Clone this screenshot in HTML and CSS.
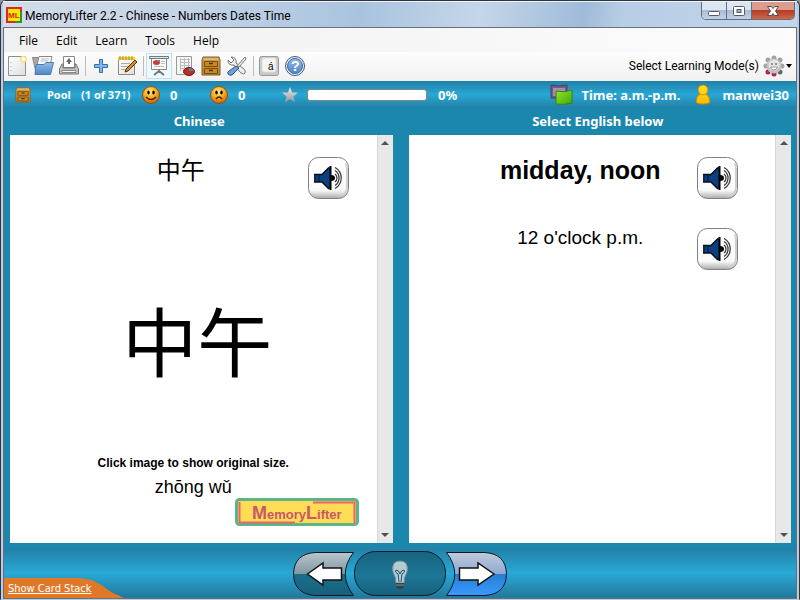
FILE: index.html
```html
<!DOCTYPE html>
<html lang="en">
<head>
<meta charset="utf-8">
<title>MemoryLifter 2.2 - Chinese - Numbers Dates Time</title>
<link rel="stylesheet" href="styles.css">
</head>
<body>
<svg class="defs" aria-hidden="true">
  <defs>
    <linearGradient id="wood" x1="0" y1="0" x2="0" y2="1"><stop offset="0" stop-color="#d9a048"/><stop offset="1" stop-color="#b87c28"/></linearGradient>
    <linearGradient id="page" x1="0" y1="0" x2="1" y2="1"><stop offset="0" stop-color="#fff"/><stop offset="1" stop-color="#dedede"/></linearGradient>
    <linearGradient id="blue" x1="0" y1="0" x2="0" y2="1"><stop offset="0" stop-color="#94bce6"/><stop offset="1" stop-color="#4f86c6"/></linearGradient>
    <radialGradient id="face" cx=".45" cy=".3" r=".7"><stop offset="0" stop-color="#ffe78a"/><stop offset=".55" stop-color="#f9a81c"/><stop offset="1" stop-color="#c95f08"/></radialGradient>
    <linearGradient id="silver" x1="0" y1="0" x2="0" y2="1"><stop offset="0" stop-color="#f0f0f0"/><stop offset="1" stop-color="#929292"/></linearGradient>
    <linearGradient id="bevel" x1="0" y1="0" x2="0" y2="1"><stop offset="0" stop-color="#fff"/><stop offset=".8" stop-color="#fafafa"/><stop offset="1" stop-color="#aaa"/></linearGradient>
    <linearGradient id="gold" x1="0" y1="0" x2="0" y2="1"><stop offset="0" stop-color="#ffe61e"/><stop offset="1" stop-color="#ffb800"/></linearGradient>
    <linearGradient id="green" x1="0" y1="0" x2="1" y2="1"><stop offset="0" stop-color="#94e82a"/><stop offset="1" stop-color="#43a608"/></linearGradient>
    <linearGradient id="prevfill" x1="0" y1="0" x2="0" y2="1"><stop offset="0" stop-color="#b9c6cc"/><stop offset=".49" stop-color="#8497a3"/><stop offset=".5" stop-color="#18708c"/><stop offset="1" stop-color="#195f7c"/></linearGradient>
    <linearGradient id="nextfill" x1="0" y1="0" x2="0" y2="1"><stop offset="0" stop-color="#c0cbd8"/><stop offset=".49" stop-color="#91a8d4"/><stop offset=".5" stop-color="#247fd0"/><stop offset="1" stop-color="#3c98ff"/></linearGradient>
    <linearGradient id="midfill" x1="0" y1="0" x2="0" y2="1"><stop offset="0" stop-color="#18627f"/><stop offset=".55" stop-color="#1c7795"/><stop offset="1" stop-color="#185f7b"/></linearGradient>
  </defs>
  <symbol id="speaker" viewBox="0 0 42 42">
    <rect x=".5" y=".5" width="40" height="41" rx="10" fill="url(#bevel)" stroke="#808080"/>
    <path d="M38 6q1 3 1 7v17q0 8-8 9" fill="none" stroke="#d0d0d0" stroke-width="2"/>
    <path d="M6 17h8l6-6 3-2v24l-3-2-6-6H6z" fill="#0a3f80"/>
    <path d="M6 17.500h8l7-7M6 25h8l7 7" fill="none" stroke="#06101c" stroke-width="1.500"/>
    <path d="M7 17v8M11 17v8" stroke="#051426"/>
    <path d="M22.500 9v24" stroke="#000" stroke-width="2"/>
    <path d="M23 18q4 0 4 3t-4 3z" fill="#000"/>
    <path d="M27 17a5 5 0 0 1 0 8M27 13.500a9 9 0 0 1 0 15M27 10.500a12 12 0 0 1 0 21" fill="none" stroke="#333" stroke-width="1.200"/>
  </symbol>
  <symbol id="crate" viewBox="0 0 20 20">
    <path d="M2 1h16l1 3v15H1V4z" fill="url(#wood)" stroke="#7b612f"/>
    <path d="M3 2h14l1 2H2z" fill="#d9b873"/>
    <path d="M3.500 5.500h13v5h-13zM3.500 12.500h13v5h-13z" fill="#cc8720" stroke="#754f16"/>
    <path d="M8 7.500h4M8 14.500h4" stroke="#4b3208" stroke-width="1.500"/>
  </symbol>
</svg>

<div class="window">
  <header class="titlebar">
    <svg class="appicon" viewBox="0 0 16 16" aria-hidden="true"><rect x="1" y="1" width="14" height="14" fill="#ffe600" stroke="#d52b20" stroke-width="2"/><path d="M9 15h6V5" fill="none" stroke="#25963a" stroke-width="2"/><text x="2" y="11" class="ml">ML</text></svg>
    <h1>MemoryLifter 2.2 - Chinese - Numbers Dates Time</h1>
    <div class="captions">
      <button aria-label="Minimize"><svg viewBox="0 0 14 12"><rect x="1.500" y="6.500" width="11" height="4" rx="1" fill="#fff" stroke="#535b6b"/></svg></button>
      <button aria-label="Maximize"><svg viewBox="0 0 14 12"><rect x="1.500" y="1.500" width="11" height="9" rx="1" fill="#fff" stroke="#535b6b"/><rect x="5" y="4.500" width="4" height="3" fill="#9cb0c8" stroke="#535b6b"/></svg></button>
      <button class="close" aria-label="Close"><svg viewBox="0 0 14 12"><path d="M1.500 1.500h4L7 3.500l1.500-2h4L9.500 6l3 4.500h-4L7 8.500l-1.500 2h-4l3-4.500z" fill="#fff" stroke="#5b4650"/></svg></button>
    </div>
  </header>

  <main class="client">
    <nav class="menu">
      <button>File</button><button>Edit</button><button>Learn</button><button>Tools</button><button>Help</button>
    </nav>

    <div class="toolbar">
      <button aria-label="New"><svg viewBox="0 0 20 20"><path d="M1.500.5h17v19h-17z" fill="url(#page)" stroke="#909090"/><path d="M4 6v1M4 10v1M4 14v1" stroke="#aaa"/><circle cx="16.500" cy="3" r="3" fill="#fff3a0" stroke="#f0de70"/><circle cx="16.500" cy="3" r="1.500" fill="#fff"/></svg></button>
      <button aria-label="Open"><svg class="folder" viewBox="0 0 22 20"><path d="M.5 1.500h6l1 2h9v13H4z" fill="#a8a8a8" stroke="#888"/><path d="M7 .5h13l-2 9H5z" fill="#fafafa" stroke="#888"/><path d="M9 3h8M8.500 5h8" stroke="#bbb"/><path d="M4 8.500h8l2-2h7.500l-3 12H3z" fill="url(#blue)" stroke="#4a7ab5"/></svg></button>
      <button aria-label="Print"><svg viewBox="0 0 20 20"><path d="M4.500.5h11v11h-11z" fill="#fff" stroke="#888"/><path d="M10 3v5" stroke="#666" stroke-width="2"/><path d="M7 6l3-4 3 4z" fill="#666"/><path d="M3 8h1v4h12V8h1l2.500 5v5H.5v-5z" fill="#c4c4c4" stroke="#777"/><path d="M3 14.500h14v2H3z" fill="#f7f7f7" stroke="#888"/></svg></button>
      <hr>
      <button aria-label="Add"><svg viewBox="0 0 20 20"><path d="M8.500 3.500h3v5h5v3h-5v5h-3v-5h-5v-3h5z" fill="#80b4ed" stroke="#376fae"/></svg></button>
      <button aria-label="Edit card"><svg viewBox="0 0 20 20"><path d="M1.500 2.500h16v16h-16z" fill="url(#page)" stroke="#888"/><path d="M1 1h17v3H1z" fill="#f1cf3a"/><path d="M3 0v4M6 0v4M9 0v4M12 0v4M15 0v4" stroke="#ad8a1d"/><path d="M4 7.500h9M4 10.500h7M4 13.500h4" stroke="#aaa"/><path d="M18 4l2 2-9 9-3 1 1-3z" fill="#d38b22" stroke="#533711"/></svg></button>
      <hr>
      <button class="active" aria-label="Slideshow"><svg viewBox="0 0 20 20"><path d="M10 13v3M10 15l-5 4M10 15l5 4" stroke="#777" stroke-width="2"/><path d="M2.500 2.500h15v11h-15z" fill="#fff" stroke="#888"/><path d="M.5.5h19v2H.5z" fill="#e8e8e8" stroke="#777"/><ellipse cx="7.500" cy="6.500" rx="3.500" ry="2.500" fill="#d5352e"/><path d="M8 4h3v2H8z" fill="#558bc7"/><path d="M12 5.500h4M12 7.500h4M5 10.500h10" stroke="#bbb"/></svg></button>
      <button aria-label="Statistics"><svg viewBox="0 0 20 20"><path d="M1.500.5h15v18h-15z" fill="#f7f7f7" stroke="#999"/><path d="M5.500 2v13M9.500 2v13M13.500 2v13M5 3.500h10M5 6.500h10M5 9.500h10M5 12.500h10" stroke="#bbb"/><ellipse cx="14" cy="15.500" rx="5.500" ry="4" fill="#b92d25" stroke="#771a18"/><path d="M14 15v-3q4 0 5 3z" fill="#4b81bb"/></svg></button>
      <button aria-label="Card boxes"><svg><use href="#crate"/></svg></button>
      <button aria-label="Options"><svg viewBox="0 0 20 20"><path d="M4 1l3 3-3 3-3-3q0 6 6 5l7 8q3 2 4 0t-1-4L9 7Q10 1 4 1z" fill="#eee" stroke="#777"/><path d="M18 1l1 2-7 8-2-1z" fill="#eee" stroke="#777"/><path d="M9 10l3 2-7 7q-2 1-4-1-1-2 1-3z" fill="#6fa2dc" stroke="#285888"/></svg></button>
      <hr>
      <button aria-label="Special characters"><svg viewBox="0 0 20 20"><rect x=".5" y=".5" width="19" height="19" rx="2" fill="#c8c8c8" stroke="#999"/><rect x="3" y="2" width="14" height="14" rx="2" fill="#f4f4f4" stroke="#ddd"/><text x="9" y="14" class="key">á</text></svg></button>
      <button aria-label="Help"><svg viewBox="0 0 20 20"><circle cx="10" cy="10" r="9.500" fill="#e6eefa" stroke="#385985"/><circle cx="10" cy="10" r="7.500" fill="url(#blue)" stroke="#416b9e"/><text x="6" y="15" class="q">?</text></svg></button>
      <button class="modes">Select Learning Mode(s)
        <svg class="gear" viewBox="0 0 22 22"><g fill="#a2a2a2"><circle cx="11" cy="3" r="2.500"/><circle cx="17" cy="5" r="2.500"/><circle cx="19" cy="11" r="2.500"/><circle cx="17" cy="17" r="2.500" fill="#666"/><circle cx="11" cy="19" r="2.500" fill="#a9215d"/><circle cx="5" cy="17" r="2.500" fill="#a9215d"/><circle cx="3" cy="11" r="2.500"/><circle cx="5" cy="5" r="2.500"/></g><circle cx="11" cy="11" r="7.500" fill="#c2c2c2"/><circle cx="11" cy="10" r="5.500" fill="#e4e4e4"/><circle cx="9" cy="9" r="1" fill="#777"/><circle cx="13" cy="9" r="1" fill="#777"/><path d="M7.500 12h7q-1 3-3.500 3t-3.500-3z" fill="#fff" stroke="#999"/></svg>
        <svg class="drop" viewBox="0 0 6 4"><path d="M0 0h6L3 4z"/></svg>
      </button>
    </div>

    <section class="status">
      <svg class="i16" aria-hidden="true"><use href="#crate"/></svg>
      <span class="small pool">Pool</span><span class="small count">(1 of 371)</span>
      <svg class="i18" viewBox="0 0 18 18" aria-hidden="true"><circle cx="9" cy="9" r="8.500" fill="url(#face)" stroke="#96510a"/><ellipse cx="6.500" cy="6.500" rx="1.200" ry="2"/><ellipse cx="11.500" cy="6.500" rx="1.200" ry="2"/><path d="M4 11q5 5 10 0" fill="none" stroke="#4b2500" stroke-width="1.500"/></svg>
      <span class="score">0</span>
      <svg class="i18" viewBox="0 0 18 18" aria-hidden="true"><circle cx="9" cy="9" r="8.500" fill="url(#face)" stroke="#96510a"/><ellipse cx="6.500" cy="6.500" rx="1.200" ry="2"/><ellipse cx="11.500" cy="6.500" rx="1.200" ry="2"/><path d="M6 13q3-4 6 0" fill="none" stroke="#4b2500" stroke-width="1.500"/></svg>
      <span class="score wide">0</span>
      <svg class="i16" viewBox="0 0 16 16" aria-hidden="true"><path d="M8 0l2 5.500h6l-4.500 4 1.500 6-5-3.500-5 3.500 1.500-6L0 5.500h6z" fill="url(#silver)"/></svg>
      <div class="progress" role="progressbar" aria-label="Learned" aria-valuenow="0"></div>
      <span class="pct">0%</span>
      <svg class="cards" viewBox="0 0 23 21" aria-hidden="true"><path d="M1 1q7 2 16 0v13H1z" fill="#765a86" stroke="#45405e"/><path d="M3 4h12v8H3z" fill="#a291ac"/><path d="M6 7q8 2 16-1v13q-8 2-16 1z" fill="url(#green)" stroke="#38830f"/></svg>
      <span class="chapter">Time: a.m.-p.m.</span>
      <svg class="user" viewBox="0 0 18 21" aria-hidden="true"><path d="M6 10Q4 8 4 5q1-4 5-4t5 4q0 3-2 5 4 3 4 8-1 2-7 2t-7-2Q2 13 6 10z" fill="url(#gold)" stroke="#d48900"/><path d="M6 10q3 2 6 0" fill="none" stroke="#dc9900"/></svg>
      <span>manwei30</span>
    </section>

    <section class="decks">
      <article class="deck">
        <h2>Chinese</h2>
        <div class="sheet">
          <div class="content question">
            <div class="entry"><p class="hanzi" lang="zh">中午</p><button class="sound" aria-label="Play"><svg><use href="#speaker"/></svg></button></div>
            <p class="picture" lang="zh">中午</p>
            <p class="hint">Click image to show original size.</p>
            <p class="pinyin">zhōng wǔ</p>
            <div class="brand"><svg viewBox="0 0 124 28" role="img" aria-label="MemoryLifter"><rect x="1.500" y="1.500" width="121" height="25" rx="3" fill="#ffdc55" stroke="#5bb588" stroke-width="3"/><path d="M4.500 4v20.500H60M78 4.500h41.500V25" fill="none" stroke="#e8656b" stroke-width="2"/><text x="17" y="21"><tspan class="cap">M</tspan><tspan>emory</tspan><tspan class="cap">L</tspan><tspan>ifter</tspan></text></svg></div>
          </div>
          <div class="scroll" aria-hidden="true"><svg viewBox="0 0 8 4"><path d="M0 4h8L4 0z"/></svg><svg viewBox="0 0 8 4"><path d="M0 0h8L4 4z"/></svg></div>
        </div>
      </article>
      <article class="deck">
        <h2>Select English below</h2>
        <div class="sheet">
          <div class="content">
            <div class="entry"><p class="answer">midday, noon</p><button class="sound" aria-label="Play"><svg><use href="#speaker"/></svg></button></div>
            <div class="entry"><p class="example">12 o'clock p.m.</p><button class="sound" aria-label="Play"><svg><use href="#speaker"/></svg></button></div>
          </div>
          <div class="scroll" aria-hidden="true"><svg viewBox="0 0 8 4"><path d="M0 4h8L4 0z"/></svg><svg viewBox="0 0 8 4"><path d="M0 0h8L4 4z"/></svg></div>
        </div>
      </article>
    </section>

    <footer class="footer">
      <a class="stack" href="#stack">Show Card Stack</a>
      <div class="controls">
        <button aria-label="Previous"><svg class="side" viewBox="0 0 61 44"><path d="M60.500.5H22Q1 2 .5 22 1 42 22 43.500h38.500Q44 22 60.500.5z" fill="url(#prevfill)" stroke="#061b25"/><path d="M14.500 22L30 11v5h18.500v12H30v5z" fill="#fff" stroke="#111" stroke-width="1.500"/></svg></button>
        <button aria-label="Show answer"><svg class="mid" viewBox="0 0 92 46"><rect x=".5" y=".5" width="91" height="44" rx="21" fill="url(#midfill)" stroke="#05202c"/><path d="M42 32q0-6-3-11-2-11 7-11t7 11q-3 5-3 11z" fill="#b7c9d1" stroke="#72909e"/><path d="M45 31l-1-8q-4-2-2-4 3 0 4 4 1-4 4-4 2 2-2 4l-1 8" fill="none" stroke="#195d76"/><path d="M42 32h8v4l-2 2h-4l-2-2z" fill="#34424b"/><path d="M42 34h8" stroke="#809099"/></svg></button>
        <button aria-label="Next"><svg class="side" viewBox="0 0 61 44"><path d="M.5.5H39Q60 2 60.500 22 60 42 39 43.500H.5Q17 22 .5.5z" fill="url(#nextfill)" stroke="#061b25"/><path d="M48 22L32 11v5H13.500v12H32v5z" fill="#fff" stroke="#111" stroke-width="1.500"/></svg></button>
      </div>
    </footer>
  </main>
</div>
</body>
</html>
```

FILE: styles.css
```css
* { box-sizing: border-box; }
body { margin: 0; background: #8f9797; font: 12px "Open Sans", sans-serif; color: #000; }
h1, h2, p { margin: 0; font-weight: normal; }
button { padding: 0; border: 0; background: none; font: inherit; color: inherit; }
svg { display: block; flex: none; }
.defs { position: absolute; width: 0; height: 0; }

.window {
  display: flex; flex-direction: column; min-height: 100vh;
  padding: 0 2px; border: 1px solid #30353d; border-bottom-color: #b9cce2; border-radius: 6px 6px 0 0;
  background: #b9cce2;
}
.titlebar {
  display: flex; align-items: center; height: 26px; padding-left: 3px; border-top: 1px solid #eef4fa;
  background: linear-gradient(100deg, #d3dce8, #c2d3e6 25%, #a9c3df 45%, #c5d6e9 60%, #9fbbd9 73%, #b8cee6 78%, #c2d5eb);
}
.appicon { width: 16px; height: 16px; margin: 1px 3px 0 0; }
.ml { font: bold 8px "Liberation Sans", sans-serif; fill: #d31f1f; }
h1 { flex: 1; padding-top: 3px; font: 12px Roboto, sans-serif; }
.captions { display: flex; align-self: flex-start; margin-right: 2px; border: 1px solid #626e81; border-top: 0; border-radius: 0 0 5px 5px; overflow: hidden; }
.captions button { display: grid; place-items: center; width: 25px; height: 17px; border-right: 1px solid #626e81; background: linear-gradient(#dce6f1 45%, #a9bdd3 50%, #bfd2e7); }
.captions .close { width: 42px; border: 0; background: linear-gradient(#dc9c8e 45%, #b53d25 50%, #cf684a); }
.captions svg { width: 14px; height: 12px; }

.client { flex: 1; display: flex; flex-direction: column; border: 1px solid #66717c; background: #1c87ac; }
.menu { display: flex; height: 24px; padding-left: 6px; background: linear-gradient(90deg, #f0f0f0, #fcfcfc); }
.menu button { padding: 0 9px; }
.toolbar { display: flex; align-items: center; height: 29px; padding: 0 4px 2px 0; background: linear-gradient(#fdfdfd, #f1f1f1); }
.toolbar button { display: flex; justify-content: center; align-items: center; width: 26px; height: 26px; }
.toolbar svg { width: 20px; height: 20px; }
.toolbar .folder { width: 22px; }
.toolbar .active { border: 1px solid #bde3f3; background: #eef8fd; }
.toolbar hr { width: 1px; height: 20px; margin: 0 2px 0 3px; border: 0; background: #bbb; }
.key { font: 10px "Liberation Sans", sans-serif; }
.q { font: bold 14px "Liberation Sans", sans-serif; fill: #fff; }
.toolbar .modes { width: auto; margin-left: auto; gap: 4px; font: 12px Roboto, sans-serif; white-space: nowrap; }
.toolbar .gear { width: 22px; height: 22px; }
.toolbar .drop { width: 6px; height: 4px; margin-left: -3px; }

.status {
  display: flex; align-items: center; height: 27px; padding: 0 7px 0 11px;
  background: linear-gradient(#2280a8, #28a7d4 50%, #2280a5);
  color: #fff; font: bold 13px "Noto Sans", sans-serif; white-space: nowrap;
}
.small { font-size: 11px; }
.pool { width: 34px; margin-left: 16px; }
.count { width: 61px; }
.i16 { width: 16px; height: 16px; }
.i18 { width: 18px; height: 18px; }
.score { width: 40px; padding-left: 10px; }
.score + .i18 { margin-left: 10px; }
.wide { width: 54px; }
.progress { width: 120px; height: 12px; margin: 0 11px 0 9px; border: 1px solid #858585; border-radius: 3px; background: #fff; }
.cards { width: 23px; height: 21px; margin-left: auto; }
.chapter { margin: 0 14px 0 8px; }
.user { width: 18px; height: 21px; margin-right: 10px; }

.decks { flex: 1; display: flex; gap: 16px; padding: 0 5px 5px 6px; }
.deck { flex: 1; min-width: 0; display: flex; flex-direction: column; }
h2 { height: 27px; padding-right: 4px; color: #fff; font: bold 13px/26px "Noto Sans", sans-serif; text-align: center; }
.sheet { flex: 1; display: flex; background: #fff; }
.content { flex: 1; display: flex; flex-direction: column; padding-top: 22px; text-align: center; font-family: "Liberation Sans", sans-serif; }
.scroll { display: flex; flex-direction: column; justify-content: space-between; align-items: center; width: 16px; padding: 6px 0; background: #e8e8e8; border-left: 1px solid #d6d6d6; }
.scroll svg { width: 8px; height: 4px; fill: #505050; }
.entry { display: grid; grid-template-columns: 1fr 42px; height: 71px; padding-right: 36px; }
.entry p { padding-left: 55px; }
.question .entry { padding-right: 27px; }
.question .entry p { padding-left: 44px; }
.sound { width: 42px; height: 42px; }
.sound svg { width: 42px; height: 42px; }
.hanzi { font: 24px/24px "Noto Sans CJK SC", sans-serif; }
.answer { font-size: 25px; font-weight: bold; line-height: 26px; }
.example { font-size: 19px; line-height: 20px; }
.picture { margin: 63px 0 69px; padding-left: 8px; font: 75px/96px "Noto Sans CJK SC", sans-serif; }
.hint { font-size: 12px; font-weight: bold; line-height: 14px; }
.pinyin { padding-top: 6px; font-size: 18px; line-height: 22px; }
.brand { display: flex; justify-content: flex-end; padding: 0 18px 0 0; }
.brand svg { width: 124px; height: 28px; }
.brand text { font: bold 13px "Liberation Sans", sans-serif; fill: #c9566a; }
.brand .cap { font-size: 18px; }

.footer { display: grid; grid-template-columns: 1fr auto 1fr; height: 50px; background: linear-gradient(#2380a5, #29a8d6 50%, #22789b); }
.stack {
  align-self: end; width: 120px; height: 20px; padding: 1px 0 0 4px;
  background: #e07828; clip-path: polygon(0 0, 63% 0, 73% 10%, 81% 35%, 90% 72%, 100% 100%, 0 100%);
  color: #fff; font: 11px/20px "DejaVu Sans Condensed", "DejaVu Sans", sans-serif; white-space: nowrap;
}
.controls { display: flex; align-items: center; padding-top: 2px; }
.side { width: 61px; height: 44px; }
.mid { width: 92px; height: 46px; }
```
